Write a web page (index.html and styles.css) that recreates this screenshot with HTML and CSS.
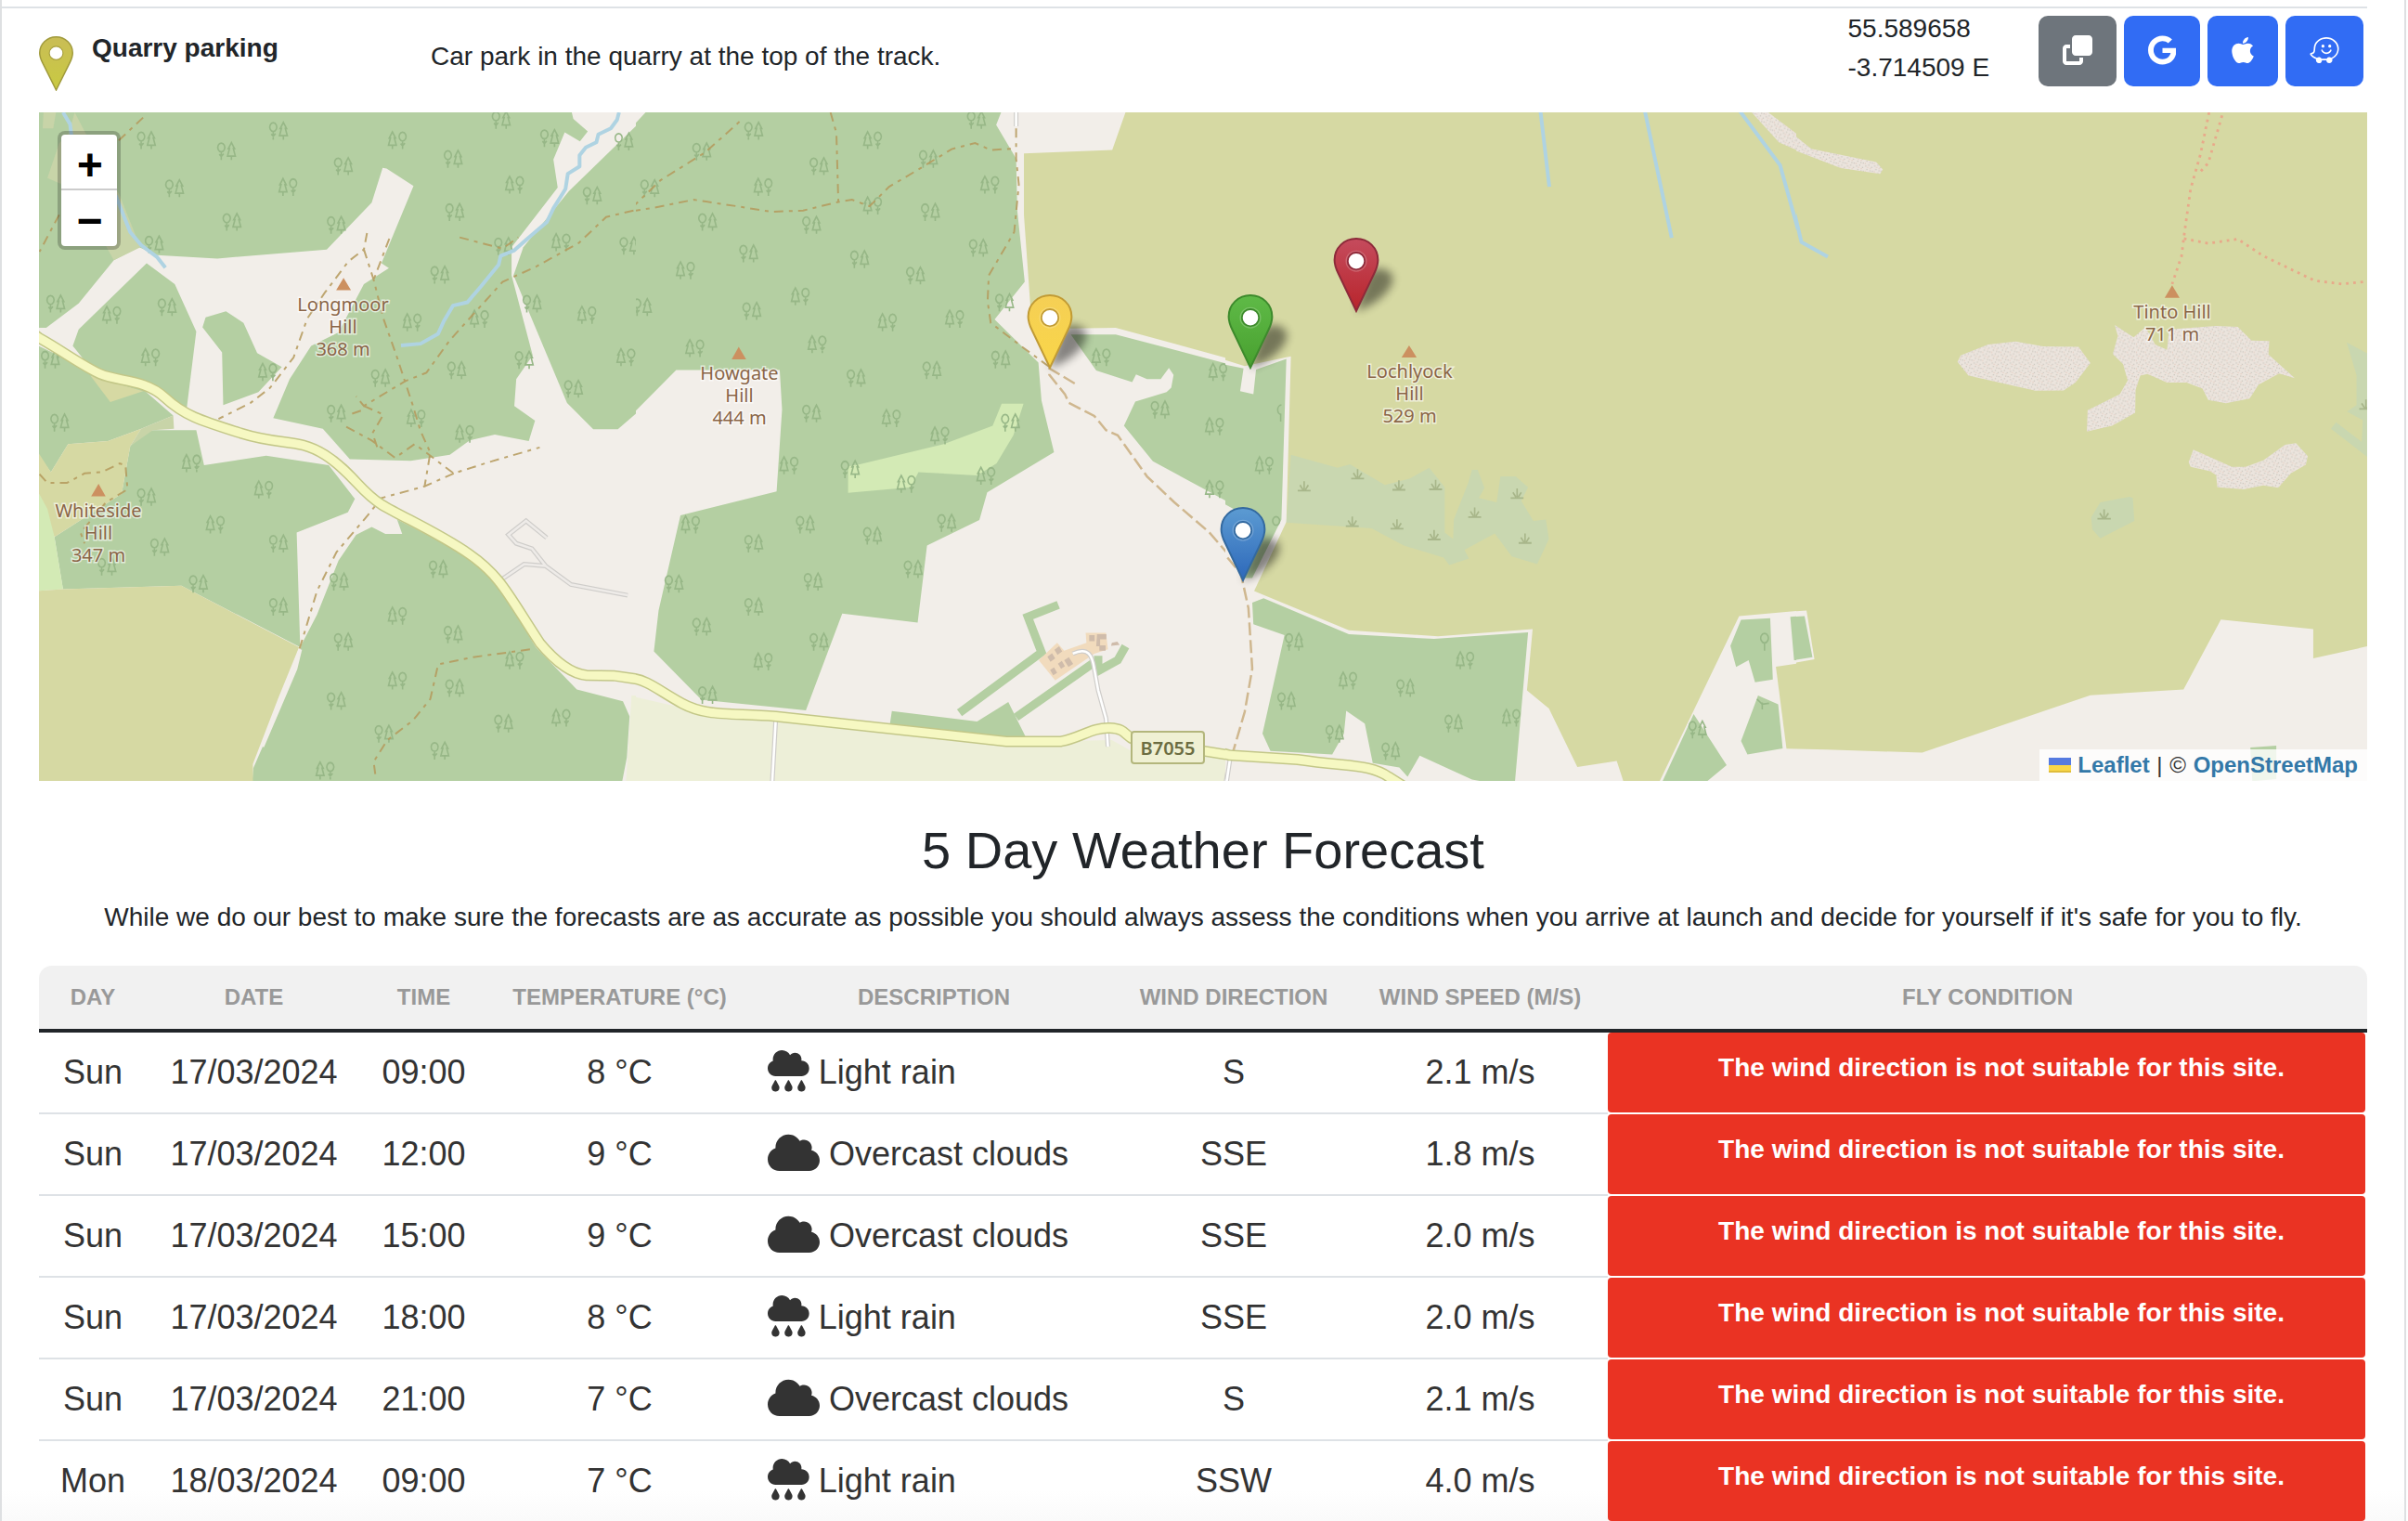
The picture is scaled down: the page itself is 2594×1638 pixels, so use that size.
FILE: index.html
```html
<!DOCTYPE html>
<html lang="en">
<head>
<meta charset="utf-8">
<title>Site guide</title>
<link rel="stylesheet" href="styles.css">
</head>
<body>
<svg class="defs" aria-hidden="true">
  <symbol id="rain" viewBox="0 0 512 512"><path d="M96 320c-53 0-96-43-96-96c0-42.5 27.6-78.6 65.9-91.2C64.7 126.1 64 119.1 64 112C64 50.1 114.1 0 176 0c43.1 0 80.5 24.3 99.2 60c14.7-17.1 36.5-28 60.8-28c44.2 0 80 35.8 80 80c0 5.5-.6 10.8-1.6 16c.5 0 1.1 0 1.6 0c53 0 96 43 96 96s-43 96-96 96H96zm-6.8 52c1.3-2.5 3.9-4 6.8-4s5.4 1.5 6.8 4l35.1 64.6c4.1 7.5 6.2 15.8 6.2 24.3v3c0 26.5-21.5 48-48 48s-48-21.5-48-48v-3c0-8.5 2.1-16.9 6.2-24.3L89.2 372zm160 0c1.3-2.5 3.9-4 6.8-4s5.4 1.5 6.8 4l35.1 64.6c4.1 7.5 6.2 15.8 6.2 24.3v3c0 26.5-21.5 48-48 48s-48-21.5-48-48v-3c0-8.5 2.1-16.9 6.2-24.3L249.2 372zm124.9 64.6L409.2 372c1.3-2.5 3.9-4 6.8-4s5.4 1.5 6.8 4l35.1 64.6c4.1 7.5 6.2 15.8 6.2 24.3v3c0 26.5-21.5 48-48 48s-48-21.5-48-48v-3c0-8.5 2.1-16.9 6.2-24.3z"/></symbol>
  <symbol id="cloud" viewBox="0 0 640 512"><path d="M0 336c0 79.5 64.5 144 144 144H512c70.7 0 128-57.3 128-128c0-61.9-44-113.6-102.4-125.4c4.1-10.7 6.4-22.4 6.4-34.6c0-53-43-96-96-96c-19.7 0-38.1 6-53.3 16.2C367 64.2 315.3 32 256 32C167.6 32 96 103.6 96 192c0 2.7 .1 5.4 .2 8.1C40.2 219.8 0 273.2 0 336z"/></symbol>
  <linearGradient id="g-yellow" x2="0" y2="1"><stop offset="0" stop-color="#f5cf55"/><stop offset="1" stop-color="#f9d648"/></linearGradient>
  <linearGradient id="g-green" x2="0" y2="1"><stop offset="0" stop-color="#5fba47"/><stop offset="1" stop-color="#48a02f"/></linearGradient>
  <linearGradient id="g-red" x2="0" y2="1"><stop offset="0" stop-color="#c54b5d"/><stop offset="1" stop-color="#b8242b"/></linearGradient>
  <linearGradient id="g-blue" x2="0" y2="1"><stop offset="0" stop-color="#5c9bd2"/><stop offset="1" stop-color="#2d68ba"/></linearGradient>
  <linearGradient id="g-olive" x2="0" y2="1"><stop offset="0" stop-color="#c9bd56"/><stop offset="1" stop-color="#c9ca41"/></linearGradient>
  <filter id="soft" x="-60%" y="-60%" width="220%" height="220%"><feGaussianBlur stdDeviation="5"/></filter>
</svg>

<main class="page">
  <div class="rule"></div>
  <section class="place">
    <div class="place-name">
      <svg class="pin" viewBox="0 0 25 41" preserveAspectRatio="none">
        <path d="M12.5.5C5.9.5.5 5.9.5 12.5c0 2.6.8 4.800 2.100 7.400L12.500 40.300l9.900-20.400c1.300-2.600 2.100-4.800 2.100-7.400C24.500 5.900 19.100.5 12.500.5z" fill="url(#g-olive)" stroke="#a09a3c"/>
        <circle cx="12.500" cy="12.600" r="5" fill="#fff" stroke="#a9a13f" stroke-width=".8"/>
      </svg>
      <strong>Quarry parking</strong>
    </div>
    <div class="place-text">Car park in the quarry at the top of the track.</div>
    <div class="place-coords">55.589658<br>-3.714509 E</div>
    <div class="place-buttons">
      <button class="btn btn-gray"><svg width="32" height="32" viewBox="0 0 512 512"><path d="M288 448L64 448l0-224 64 0 0-64-64 0c-35.300 0-64 28.700-64 64L0 448c0 35.300 28.700 64 64 64l224 0c35.300 0 64-28.700 64-64l0-64-64 0 0 64zm-64-96l224 0c35.300 0 64-28.700 64-64l0-224c0-35.300-28.700-64-64-64L224 0c-35.300 0-64 28.700-64 64l0 224c0 35.300 28.700 64 64 64z"/></svg></button>
      <button class="btn"><svg width="30.5" height="32" viewBox="0 0 488 512"><path d="M488 261.800C488 403.300 391.100 504 248 504 110.800 504 0 393.200 0 256S110.800 8 248 8c66.800 0 123 24.500 166.300 64.900l-67.500 64.900C258.500 52.600 94.300 116.600 94.300 256c0 86.500 69.100 156.600 153.700 156.600 98.200 0 135-70.400 140.800-106.900H248v-85.300h236.100c2.300 12.700 3.900 24.900 3.900 41.400z"/></svg></button>
      <button class="btn"><svg width="24" height="32" viewBox="0 0 384 512"><path d="M318.700 268.700c-.2-36.700 16.400-64.400 50-84.800-18.800-26.900-47.200-41.700-84.700-44.600-35.500-2.800-74.300 20.700-88.500 20.700-15 0-49.400-19.700-76.400-19.700C63.300 141.200 4 184.800 4 273.500q0 39.300 14.400 81.200c12.800 36.700 59 126.700 107.200 125.200 25.200-.6 43-17.900 75.800-17.900 31.800 0 48.300 17.900 76.400 17.900 48.600-.7 90.400-82.500 102.600-119.300-65.200-30.700-61.700-90-61.700-91.900zm-56.600-164.200c27.300-32.400 24.800-61.900 24-72.500-24.100 1.400-52 16.400-67.900 34.900-17.500 19.800-27.800 44.300-25.600 71.900 26.100 2 49.900-11.400 69.500-34.300z"/></svg></button>
      <button class="btn"><svg width="32" height="32" viewBox="0 0 512 512"><path d="M502.170 201.670C516.690 287.530 471.230 369.590 389 409.800c13 34.100-12.400 70.200-48.320 70.200a51.680 51.680 0 0 1-51.570-49c-6.440.19-64.200 0-76.330-.64A51.690 51.690 0 0 1 159 479.920c-33.860-1.360-57.950-34.840-47-67.920-37.210-13.110-72.540-34.870-99.620-70.800-13-17.280-.48-41.800 20.840-41.800 46.310 0 32.220-54.170 43.150-110.260C94.800 95.200 193.120 32 288.090 32c102.480 0 197.150 70.670 214.080 169.670zM373.510 388.280c42-19.180 81.330-56.710 96.290-102.140 40.480-123.090-64.150-228-181.710-228-83.450 0-170.320 55.420-186.070 136-9.530 48.910 5 131.350-68.750 131.350C58.210 358.600 91.600 378.110 127 389.540c24.660-21.800 63.870-15.470 79.830 14.340 14.220 1 79.190 1.180 87.900.82a51.690 51.690 0 0 1 78.780-16.420zM205.120 187.130c0-34.740 50.840-34.750 50.840 0s-50.840 34.740-50.840 0zm116.570 0c0-34.740 50.860-34.750 50.860 0s-50.860 34.750-50.860 0zm-122.610 70.690c-3.440-16.940 22.180-22.180 25.620-5.210l.06.28c4.140 21.420 29.850 44 64.120 43.070 35.680-.94 59.250-22.210 64.110-42.770 4.460-16.050 28.600-10.360 25.470 6-5.230 22.180-31.210 62-91.460 62.900-42.550 0-80.880-27.840-87.900-64.250z"/></svg></button>
    </div>
  </section>

  <section class="map">
    <svg class="map-canvas" width="2508" height="720" viewBox="0 0 2508 720">
      <defs>
        <clipPath id="c1"><rect x="0" y="0" width="643" height="720"/></clipPath>
        <clipPath id="c2"><rect x="643" y="0" width="635" height="720"/></clipPath>
        <clipPath id="c3"><rect x="1278" y="0" width="615" height="720"/></clipPath>
        <clipPath id="c4"><rect x="1893" y="0" width="615" height="720"/></clipPath>
        <marker id="ta" markerUnits="userSpaceOnUse" markerWidth="60" markerHeight="60" viewBox="-30 -30 60 60"><path class="tree" d="M-13 2V21M-18 8L-13 13L-7 7M-13 2a9 10 0 1 1 .1 0M13 -19L5 -5H8L3 12H23L18 -5H21ZM13 12V21"/></marker>
        <marker id="tb" markerUnits="userSpaceOnUse" markerWidth="60" markerHeight="60" viewBox="-30 -30 60 60"><path class="tree" d="M14 2V21M9 8L14 13L20 7M14 2a9 10 0 1 1 .1 0M-12 -19L-20 -5H-17L-22 12H-2L-7 -5H-4ZM-12 12V21"/></marker>
        <marker id="reed" markerUnits="userSpaceOnUse" markerWidth="50" markerHeight="50" viewBox="-25 -25 50 50"><path class="reed" d="M-17 10H17M0 10V-12M-3 8L-11 -3M3 8L11 -3"/></marker>
        <pattern id="scree" width="23" height="19" patternUnits="userSpaceOnUse"><rect width="23" height="19" fill="#ebe4dd"/><path class="dots" d="M3 4h3M11 2h3M18 7h3M6 12h3M14 15h3M20 16h3" stroke="#cbc6be"/><path class="dots" d="M8 7h2.500M2 17h2.500M15 10h2.500" stroke="#e4cabd"/></pattern>
      </defs>

      <!-- west -->
      <g clip-path="url(#c1)"><g transform="translate(-12 -6) scale(.42092 .46556)">
        <path class="wood" d="M20 5H1390L1396 28L1433 57L1413 80L1374 59L1345 122L1356 187L1238 325V390L1292 575L1250 630L1245 692L1298 726L1282 773L1195 758L1130 772L1080 805L980 819L824 815L755 745L628 720L670 630L725 553L795 522L860 410L924 373L905 362L987 183L918 143L908 141L880 222L765 330L485 351L330 343L285 325L220 355L130 455L47 511H20Z"/>
        <path class="wood" d="M304 362L376 410L431 520L407 695L300 650L170 615L115 553L130 515Z"/>
        <path class="wood" d="M20 550L160 610L290 650L372 714L290 745L205 773L103 780L59 845L20 797Z"/>
        <path class="wood" d="M290 757L320 748H431L451 829L610 807L770 829L837 907L819 938L688 985L697 1250L393 1108L90 1116L68 995L240 895L262 785Z"/>
        <path class="wood" d="M840 990L880 972L915 988H958L945 955L1130 1040L1200 1100L1300 1250L1405 1348L1523 1375L1540 1410L1533 1505L1518 1575H573L577 1530L688 1300L700 1245L740 1175L795 1050Z"/>
        <path class="wood" d="M455 487L507 473L552 500L587 570L650 602L590 660L500 690L497 568L447 510Z"/>
        <path class="wood" d="M1575 28L1385 195L1268 325L1243 390L1380 685L1447 746H1510L1575 695Z"/>
        <path class="mix" d="M120 13L150 65L235 205L288 325L220 355L200 322L140 200L50 165L80 85L105 60ZM40 13H72L65 50H38Z"/>
        <path class="heath" d="M160 622L295 658L211 683Z"/>
        <path class="heath" d="M20 790L59 845L103 780L205 773L290 745L262 785L240 895L68 995L20 885Z"/>
        <path class="mix" d="M290 745L372 714L374 745L320 748L262 785Z"/>
        <path class="meadow" d="M20 880L50 930L68 995L90 1116L20 1120Z"/>
        <path class="heath" d="M20 1120L90 1116L393 1108L694 1250L640 1370L576 1520V1575H20Z"/>
        <path class="strip" d="M697 1255L685 1300L600 1480"/>
        <path class="farm" d="M1545 1362H1575V1575H1530Z"/>
        <polyline class="pts" marker-start="url(#ta)" marker-mid="url(#ta)" marker-end="url(#ta)" points="641,55 303,77 508,102 807,137 375,188 522,266 789,273 323,318 1088,120 1211,30 1335,72 1092,243 1217,322 1054,388 1444,205 1538,321 1396,652 1097,609 902,627 789,709 71,455 356,463 57,584 81,730 303,902 337,1018 436,1103 641,1010 641,1156 202,1063 1050,1069 807,1237 1088,1220 1092,1344 789,1374 911,1450 1217,1426 1054,1489 796,1098 1290,455 1525,80 1270,585"/>
        <polyline class="pts" marker-start="url(#tb)" marker-mid="url(#tb)" marker-end="url(#tb)" points="945,77 665,185 1245,180 1364,313 1155,490 983,498 1430,481 214,481 313,579 613,613 1530,579 993,720 1117,756 418,824 603,885 479,966 945,1177 945,1327 1245,1280 1364,1413 760,1535"/>
        <path class="water" d="M90 13L108 40L112 70M225 205L240 240L262 290L290 320L330 347L352 372"/>
        <path class="water" d="M1513 13L1508 30L1492 50L1460 64L1455 82L1428 94L1412 112V138L1382 155L1376 190L1345 235L1328 267L1285 300L1245 332L1210 345L1205 365L1160 415L1125 452L1088 460L1065 495L1050 525L1005 548L955 552"/>
        <path class="track" d="M868 292L860 330L820 358L760 430L715 490L680 580L620 650L570 685L488 722M860 330L885 400L910 490L945 580L985 690L1005 750L1030 800L1015 880M925 305L885 400M1105 302L1215 328L1255 302M1550 240L1480 255L1410 315L1300 370L1215 405L1150 470L1080 540L1020 615L965 635L860 692L840 670M860 692L910 712L882 755L895 790M830 710L862 700M815 740L880 772L940 812L990 780L1090 848L1180 822L1310 788M1090 848L1015 878L905 905L870 945L790 1030L740 1120L695 1255M295 25L230 80M80 250L30 335M30 850L50 870H100L145 848L190 845L235 825L250 830L255 885L200 915L135 985L145 1010M1285 1255L1230 1262L1140 1273L1050 1290L1030 1370L985 1420L920 1465L885 1515L890 1550"/>
        <path class="lane-c" d="M1210 1095L1270 1058L1325 1062L1390 1105L1535 1130M1325 1062L1290 1022L1250 1010L1230 990L1275 958L1328 997"/><path class="lane" d="M1210 1095L1270 1058L1325 1062L1390 1105L1535 1130M1325 1062L1290 1022L1250 1010L1230 990L1275 958L1328 997"/>
        <path class="road-c" d="M0 515L29 535C80 560 140 600 185 618S300 630 350 672S440 725 545 755S690 765 760 805S850 890 905 920S1050 985 1130 1035S1230 1130 1310 1240Q1375 1310 1430 1315L1500 1316L1575 1326"/>
        <path class="road" d="M0 515L29 535C80 560 140 600 185 618S300 630 350 672S440 725 545 755S690 765 760 805S850 890 905 920S1050 985 1130 1035S1230 1130 1310 1240Q1375 1310 1430 1315L1500 1316L1575 1326"/>
        <path class="peak" d="M789 424L808 396L827 424ZM162 901L181 872L199 901Z"/>
      </g></g>

      <!-- centre west -->
      <g clip-path="url(#c2)"><g transform="translate(638 -6) scale(.42092 .46556)">
        <path class="wood" d="M-5 53L45 5H950L934 42L985 120L988 240L1007 405L930 492L1042 592L1050 680L1082 799L911 892L891 956L757 1015L733 1193L540 1172L447 1396L180 1372L58 1260L70 1165L126 945L372 890L386 700L380 609H115L-5 718Z"/>
        <path class="meadow" d="M555 893V832L585 827L800 780L925 738L948 687H1004L978 760L935 825L885 853L735 845L715 880Z"/>
        <path class="heath" d="M1268 5L1231 100L1005 108V250L1023 480L1125 513L1240 511L1575 594V5Z"/>
        <path class="wood" d="M1125 527H1240L1575 606L1557 660H1575V938L1540 920L1335 820L1261 738L1290 682L1370 660L1382 650L1388 620L1376 604L1355 630H1320L1292 619L1282 637L1190 610Z"/>
        <path class="farm" d="M-5 1362L130 1390L370 1412L1000 1470L1230 1465L1280 1490L1532 1508L1520 1575H-5Z"/>
        <path class="belt" d="M840 1402L1050 1262L1015 1180L1093 1152M985 1412L1185 1285M1195 1270V1305L1245 1280L1265 1248"/>
        <path class="wood" d="M667 1398L885 1422L965 1377L1012 1462L662 1428Z"/>
        <path fill="#f1dbbd" d="M1043 1280L1090 1240L1108 1258L1165 1240L1163 1217H1215L1220 1255L1185 1265L1085 1327Z"/>
        <path fill="#cfbcab" d="M1065 1272l12-8l8 12l-12 8zM1083 1256l12-8l8 12l-12 8zM1072 1303l10-6l8 12l-10 6zM1092 1288l10-6l8 12l-10 6zM1108 1280l12-7l11 16l-12 7zM1172 1222h14v14h-14zM1192 1220h24v12h-16v14h14v12h-16v-10h-8zM1230 1240l14-3l6 8l-22 2z"/>
        <polyline class="pts" marker-start="url(#ta)" marker-mid="url(#ta)" marker-end="url(#ta)" points="313,55 180,103 480,137 47,188 760,120 883,30 765,243 195,266 461,273 300,339 584,352 727,390 888,326 28,463 308,472 945,584 575,627 769,609 461,709 970,730 560,838 445,966 313,1010 617,992 807,962 721,1069 465,1098 313,1156 109,1103 180,1202 480,1237 195,1360 1353,700 955,452"/>
        <polyline class="pts" marker-start="url(#tb)" marker-mid="url(#tb)" marker-end="url(#tb)" points="617,77 337,185 917,180 617,228 138,378 432,438 655,498 827,490 162,558 475,549 665,720 789,760 403,829 703,872 907,853 151,966 337,1283 1202,579 1501,613 1492,739 1492,884"/>
        <path class="track" d="M985 50V120L992 180L980 290L915 390L912 450L920 500L1000 555L1075 605M0 242L60 233L160 215L270 230L360 243L440 240L530 220L565 215L610 230L660 185L735 145L820 98L880 84L920 100L975 97M0 235L75 170L190 105L285 28M510 13L525 60L530 220"/>
        <path class="path" d="M1135 640L1070 605V620L1110 665L1120 685L1185 715L1215 748L1245 760L1320 855L1390 915L1480 985L1575 1085M1575 1390L1545 1480"/>
        <path class="lane-c" d="M1130 1265C1170 1248 1180 1270 1185 1300L1195 1350L1215 1415L1220 1480M370 1415L360 1575M985 5V45M1532 1505L1520 1575"/>
        <path class="lane w" d="M1130 1265C1170 1248 1180 1270 1185 1300L1195 1350L1215 1415L1220 1480M370 1415L360 1575M985 5V45M1532 1505L1520 1575"/>
        <path class="road-c" d="M-6 1321L0 1322C40 1325 70 1350 130 1380S250 1402 370 1410L960 1468L1100 1468C1150 1460 1180 1435 1225 1437S1260 1455 1290 1465L1575 1506"/>
        <path class="road" d="M-6 1321L0 1322C40 1325 70 1350 130 1380S250 1402 370 1410L960 1468L1100 1468C1150 1460 1180 1435 1225 1437S1260 1455 1290 1465L1575 1506"/>
        <path class="peak" d="M257 584L275 555L294 584Z"/>
      </g></g>

      <!-- centre east -->
      <g clip-path="url(#c3)"><g transform="translate(1258 -6) scale(.40816 .46556)">
        <path class="heath" d="M-5 5H1575V1165L1405 1178L1187 1575H1105L1082 1513L978 1527L903 1392L845 1350L860 1208L610 1225L375 1211L125 1120L210 960L222 577L100 600L-5 571Z"/>
        <path class="marsh" d="M222 805L345 835L378 827L470 875L535 860L587 835L628 880V985L650 1000L652 955L690 870L700 840H715L733 882L718 905L765 915L775 855H815L848 880L830 912L862 958L895 955L903 1000L872 1058L805 1040L760 987L680 1025L692 1045L640 1060L625 1043L520 1015L435 975L210 962Z"/>
        <path class="wood" d="M-5 587L97 605L88 658L123 665L130 608L210 583L197 955L120 1090H100L70 930L-5 893Z"/>
        <path class="wood" d="M120 1147L150 1137L375 1220L600 1231L848 1216L812 1575L700 1556L562 1501L530 1550L508 1528L438 1518L417 1427L368 1397L362 1450L331 1498L168 1490L147 1450L205 1222L123 1197Z"/>
        <path class="wood" d="M1410 1187L1487 1183L1494 1325L1447 1331L1430 1280L1397 1296L1382 1247ZM1540 1180L1575 1177V1280H1550ZM1455 1362L1508 1382L1520 1484L1427 1498L1410 1467ZM1285 1405L1372 1523L1300 1575H1195Z"/>
        <path class="heath" d="M1502 1295L1575 1286V1486L1530 1485Z"/>
        <path class="scree" d="M1430 5H1470L1568 70V105L1510 82Z"/>
        <polyline class="pts" marker-start="url(#ta)" marker-mid="url(#ta)" marker-end="url(#ta)" points="230,1237 524,1344 210,1374 337,1450 485,1490 651,1426 1295,1440"/>
        <polyline class="pts" marker-start="url(#tb)" marker-mid="url(#tb)" marker-end="url(#tb)" points="29,614 21,739 21,884 151,829 681,1280 372,1327 803,1413"/>
        <path class="tree" d="M1472 1240V1258M1472 1240a10 11 0 1 1 .1 0M183 968a9 10 0 1 1 .1 0M195 712V728M197 712a9 10 0 0 1 0-22M1466 1378v16M1452 1370l14 12l18 -2"/>
        <polyline class="pts" marker-start="url(#reed)" marker-mid="url(#reed)" marker-end="url(#reed)" points="257,878 398,850 507,876 604,875 819,895 384,960 502,966 600,991 707,939 840,999"/>
        <path class="water" d="M880 5L904 185M1155 5L1227 303M1403 5L1513 135L1575 330"/>
        <path class="path" d="M-5 980L90 1080L110 1160L120 1300L100 1400L70 1490"/>
        <path class="farm" d="M-5 1505L45 1515L30 1575H-5Z"/>
        <path class="lane-c" d="M62 1505L50 1575"/><path class="lane w" d="M62 1505L50 1575"/>
        <path class="road-c" d="M-5 1484L60 1500L240 1510C380 1528 430 1520 480 1550L520 1572"/>
        <path class="road" d="M-5 1484L60 1500L240 1510C380 1528 430 1520 480 1550L520 1572"/>
        <path class="peak" d="M514 580L534 552L554 580Z"/>
      </g></g>

      <!-- east -->
      <g clip-path="url(#c4)"><g transform="translate(1888 -6) scale(.42347 .46556)">
        <path class="heath" d="M-5 5H1475V1246L1327 1276V1208L1092 1186L997 1348L760 1361L332 1494L90 1487L-5 1485Z"/>
        <path class="land" d="M-5 1168L38 1165L58 1278L-5 1288Z"/>
        <path class="wood" d="M-5 1180L33 1178L53 1273L7 1280L-5 1230ZM1167 1482L1233 1478V1555L1172 1560Z"/>
        <path class="scree" d="M-5 57L50 97L215 128L232 145L225 155L125 142L-5 96Z"/>
        <path class="scree" d="M422 590L430 575L500 550L570 543L640 554L730 555L760 593L722 638L692 656L620 657L450 622Z"/>
        <path class="scree" d="M822 505L870 533L900 510L925 550L955 562L960 515L1080 507L1135 509L1170 541L1215 542L1213 573L1280 628L1240 617L1188 643L1165 675L1105 686L1060 678L1045 652L1005 638H955L905 618L887 622L875 655L874 708L815 738L751 751L753 702L835 665L855 633L843 595L817 572L830 530Z"/>
        <path class="scree" d="M1022 793L1120 833H1155L1200 818L1255 782L1283 778L1313 808L1308 828L1270 848L1238 881L1200 876L1150 885L1083 880L1080 852L1065 843L1015 833L1010 822Z"/>
        <path class="marsh" d="M762 950L785 915L860 902L868 905L872 958L785 998L765 978ZM1412 545L1470 573V814L1372 745L1385 730L1450 775L1453 725L1413 705L1437 690V620Z"/>
        <polyline class="pts" marker-start="url(#reed)" marker-mid="url(#reed)" marker-end="url(#reed)" points="795,943 1461,689"/>
        <path class="water" d="M-5 200L25 313L92 347"/>
        <path class="foot" d="M1062 13L1040 110L1015 190L998 300L992 345L968 410M1095 20L1060 130L1035 155M998 305L1060 316L1135 306L1200 345L1330 402L1400 410L1464 404"/>
        <path class="peak" d="M949 442L968 413L987 442Z"/>
      </g></g>

      <g class="labels">
        <text x="327.500" y="214">Longmoor</text><text x="327.500" y="238">Hill</text><text x="327.500" y="262">368 m</text>
        <text x="64" y="436">Whiteside</text><text x="64" y="460">Hill</text><text x="64" y="483.500">347 m</text>
        <text x="754.500" y="287.500">Howgate</text><text x="754.500" y="311.500">Hill</text><text x="754.500" y="335.500">444 m</text>
        <text x="1476.500" y="285.500">Lochlyock</text><text x="1476.500" y="309.500">Hill</text><text x="1476.500" y="333.500">529 m</text>
        <text x="2298" y="221.500">Tinto Hill</text><text x="2298" y="245.500">711 m</text>
      </g>
      <rect x="1177" y="667" width="78" height="34" rx="3" fill="#eff0d3" stroke="#b3b67c" stroke-width="2"/>
      <text class="shield" x="1216" y="692">B7055</text>

      <g transform="translate(1064 195)"><path class="shadow" d="M25 80L36 44C44 28 60 34 64 42C67 54 50 72 25 80Z"/><g transform="scale(2)"><path class="body" fill="url(#g-yellow)" stroke="#c19b35" d="M12.500 1C6 1 .8 6 .8 12.500c0 2.600.8 4.800 2.100 7.400L12.500 40l9.600-20.100c1.300-2.600 2.100-4.800 2.100-7.400C24.200 6 19 1 12.500 1z"/><circle class="glow" cx="12.500" cy="13.100" r="5.400"/><circle class="hole" cx="12.500" cy="13.100" r="4.600" stroke="#c19b35"/></g></g>
      <g transform="translate(1280 195)"><path class="shadow" d="M25 80L36 44C44 28 60 34 64 42C67 54 50 72 25 80Z"/><g transform="scale(2)"><path class="body" fill="url(#g-green)" stroke="#3d8a2c" d="M12.500 1C6 1 .8 6 .8 12.500c0 2.600.8 4.800 2.100 7.400L12.500 40l9.600-20.100c1.300-2.600 2.100-4.800 2.100-7.400C24.200 6 19 1 12.500 1z"/><circle class="glow" cx="12.500" cy="13.100" r="5.400"/><circle class="hole" cx="12.500" cy="13.100" r="4.600" stroke="#3d8a2c"/></g></g>
      <g transform="translate(1394 134)"><path class="shadow" d="M25 80L36 44C44 28 60 34 64 42C67 54 50 72 25 80Z"/><g transform="scale(2)"><path class="body" fill="url(#g-red)" stroke="#8d2a3a" d="M12.500 1C6 1 .8 6 .8 12.500c0 2.600.8 4.800 2.100 7.400L12.500 40l9.600-20.100c1.300-2.600 2.100-4.800 2.100-7.400C24.200 6 19 1 12.500 1z"/><circle class="glow" cx="12.500" cy="13.100" r="5.400"/><circle class="hole" cx="12.500" cy="13.100" r="4.600" stroke="#8d2a3a"/></g></g>
      <g transform="translate(1272 424)"><path class="shadow" d="M25 80L36 44C44 28 60 34 64 42C67 54 50 72 25 80Z"/><g transform="scale(2)"><path class="body" fill="url(#g-blue)" stroke="#33699f" d="M12.500 1C6 1 .8 6 .8 12.500c0 2.600.8 4.800 2.100 7.400L12.500 40l9.600-20.100c1.300-2.600 2.100-4.800 2.100-7.400C24.200 6 19 1 12.500 1z"/><circle class="glow" cx="12.500" cy="13.100" r="5.400"/><circle class="hole" cx="12.500" cy="13.100" r="4.600" stroke="#33699f"/></g></g>
    </svg>
    <div class="zoom"><a class="zoom-in">+</a><a class="zoom-out">&#x2212;</a></div>
    <div class="credit"><svg width="24" height="16" viewBox="0 0 12 8"><path fill="#567be0" d="M0 0h12v4H0z"/><path fill="#f9d749" d="M0 4h12v3H0z"/><path fill="#dfbc3b" d="M0 7h12v1H0z"/></svg><b>Leaflet</b><span>|</span><span>©</span><b>OpenStreetMap</b></div>
  </section>

  <h2 class="title">5 Day Weather Forecast</h2>
  <p class="note">While we do our best to make sure the forecasts are as accurate as possible you should always assess the conditions when you arrive at launch and decide for yourself if it's safe for you to fly.</p>

  <table class="forecast">
    <colgroup><col class="c-day"><col class="c-date"><col class="c-time"><col class="c-temp"><col class="c-desc"><col class="c-dir"><col class="c-speed"><col class="c-fly"></colgroup>
    <thead><tr><th>DAY</th><th>DATE</th><th>TIME</th><th>TEMPERATURE (°C)</th><th>DESCRIPTION</th><th>WIND DIRECTION</th><th>WIND SPEED (M/S)</th><th>FLY CONDITION</th></tr></thead>
    <tbody>
      <tr><td>Sun</td><td>17/03/2024</td><td>09:00</td><td>8 °C</td><td class="desc"><svg class="i-rain"><use href="#rain"/></svg> Light rain</td><td>S</td><td>2.1 m/s</td><td class="fly"><div class="alert">The wind direction is not suitable for this site.</div></td></tr>
      <tr><td>Sun</td><td>17/03/2024</td><td>12:00</td><td>9 °C</td><td class="desc"><svg class="i-cloud"><use href="#cloud"/></svg> Overcast clouds</td><td>SSE</td><td>1.8 m/s</td><td class="fly"><div class="alert">The wind direction is not suitable for this site.</div></td></tr>
      <tr><td>Sun</td><td>17/03/2024</td><td>15:00</td><td>9 °C</td><td class="desc"><svg class="i-cloud"><use href="#cloud"/></svg> Overcast clouds</td><td>SSE</td><td>2.0 m/s</td><td class="fly"><div class="alert">The wind direction is not suitable for this site.</div></td></tr>
      <tr><td>Sun</td><td>17/03/2024</td><td>18:00</td><td>8 °C</td><td class="desc"><svg class="i-rain"><use href="#rain"/></svg> Light rain</td><td>SSE</td><td>2.0 m/s</td><td class="fly"><div class="alert">The wind direction is not suitable for this site.</div></td></tr>
      <tr><td>Sun</td><td>17/03/2024</td><td>21:00</td><td>7 °C</td><td class="desc"><svg class="i-cloud"><use href="#cloud"/></svg> Overcast clouds</td><td>S</td><td>2.1 m/s</td><td class="fly"><div class="alert">The wind direction is not suitable for this site.</div></td></tr>
      <tr><td>Mon</td><td>18/03/2024</td><td>09:00</td><td>7 °C</td><td class="desc"><svg class="i-rain"><use href="#rain"/></svg> Light rain</td><td>SSW</td><td>4.0 m/s</td><td class="fly"><div class="alert">The wind direction is not suitable for this site.</div></td></tr>
    </tbody>
  </table>
</main>
</body>
</html>
```
FILE: styles.css
```css
* { box-sizing: border-box; }
body { margin: 0; background: #fff; color: #212529; font: 28px/42px "Liberation Sans", Arial, sans-serif; overflow: hidden; }
.defs { position: absolute; width: 0; height: 0; }

.page { width: 2592px; height: 1638px; overflow: hidden; padding-top: 7px; border-left: 2px solid #dee0e2; border-right: 2px solid #dee0e2; background: linear-gradient(#fff 1605px, #fafafa 1638px); }
.rule { height: 2px; margin-right: 40px; background: #dee2e6; }

.place { display: flex; height: 112px; padding: 0 44px 0 40px; }
.place-name { display: flex; align-items: flex-start; gap: 20px; width: 422px; padding-top: 22px; }
.pin { width: 37px; height: 59px; margin-top: 8px; }
.place-text { flex: 1; padding-top: 31px; }
.place-coords { width: 205px; padding-top: 1px; }
.place-buttons { display: flex; align-items: flex-start; gap: 8px; padding-top: 8px; }
.btn { display: flex; align-items: center; height: 76px; padding: 0 26px 2px; border: 0; border-radius: 10px; background: #316cf4; }
.btn svg { fill: #fff; }
.btn-gray { background: #6e757c; }

.map { position: relative; height: 720px; margin: 0 40px; background: #f2eee9; overflow: hidden; }
.map-canvas { display: block; }
.map-canvas path { vector-effect: non-scaling-stroke; }
.wood { fill: #b4cfa2; }
.heath { fill: #d6d9a3; }
.mix { fill: #c8d4a8; }
.meadow { fill: #d3eab5; }
.farm { fill: #edefd8; }
.land { fill: #f2eee9; }
.marsh { fill: #c9d7b0; }
.scree { fill: url(#scree); }
.pts { fill: none; stroke: none; }
.map-canvas .tree { fill: none; stroke: #97b787; stroke-width: 3.800px; vector-effect: none; }
.map-canvas .reed { fill: none; stroke: #a8b68a; stroke-width: 4px; vector-effect: none; }
.map-canvas .dots { stroke-width: 2.600px; vector-effect: none; }
.water { fill: none; stroke: #afd3e2; stroke-width: 4px; stroke-linejoin: round; }
.strip { fill: none; stroke: #f2eee9; stroke-width: 4px; }
.belt { fill: none; stroke: #b4cfa2; stroke-width: 9px; }
.track { fill: none; stroke: #b59a5c; stroke-width: 2px; stroke-dasharray: 10 6 4 6; opacity: .85; }
.path { fill: none; stroke: #cfb78f; stroke-width: 2.500px; stroke-dasharray: 14 5; }
.foot { fill: none; stroke: #e8a98a; stroke-width: 2.800px; stroke-dasharray: 2.800 5; }
.lane-c { fill: none; stroke: #cfcdca; stroke-width: 5px; }
.lane { fill: none; stroke: #eeebe8; stroke-width: 2.600px; }
.lane.w { stroke: #fff; }
.road-c { fill: none; stroke: #c3c788; stroke-width: 12px; }
.road { fill: none; stroke: #f6f8c2; stroke-width: 9px; }
.peak { fill: #cc9060; }
.labels text { font: 20px "Noto Sans", sans-serif; text-anchor: middle; fill: #8a6547; stroke: rgba(255, 255, 255, .6); stroke-width: 3px; paint-order: stroke; }
.shield { font: 600 20px "Noto Sans", sans-serif; text-anchor: middle; fill: #6c6d42; }
.shadow { fill: #000; opacity: .45; filter: url(#soft); }
.body { stroke-width: 2px; }
.hole { fill: #fff; stroke-width: .9; }
.glow { fill: none; stroke: rgba(255, 255, 255, .2); stroke-width: .7; }

.zoom { position: absolute; left: 20px; top: 20px; width: 68px; border: 4px solid rgba(0, 0, 0, .22); border-radius: 8px; background: #fff; background-clip: padding-box; }
.zoom a { display: block; height: 60px; padding: 9px 0 0 2px; font: bold 48px/54px "Liberation Mono", monospace; text-align: center; color: #000; }
.zoom-in { border-bottom: 2px solid #ccc; }
.credit { position: absolute; right: 0; bottom: 0; display: flex; align-items: center; gap: 7.700px; height: 34px; padding: 0 10px; background: rgba(255, 255, 255, .8); color: #333; font-size: 24px; line-height: 32px; }
.credit b { color: #3378a8; }

.title { margin: 41px 0 17px; font-size: 56px; line-height: 67px; font-weight: 400; text-align: center; }
.note { margin: 0; padding: 1px 0 31px; text-align: center; }

.forecast { width: 2508px; margin: 0 40px; table-layout: fixed; border-collapse: separate; border-spacing: 0; color: #333; }
.c-day { width: 116px; }
.c-date { width: 231px; }
.c-time { width: 135px; }
.c-temp { width: 287px; }
.c-desc { width: 390px; }
.c-dir { width: 256px; }
.c-speed { width: 275px; }
.c-fly { width: 818px; }
.forecast th { padding: 20px 0; background: #f1f1f1; border-bottom: 4px solid #212529; color: #999; font-size: 24px; line-height: 28px; }
.forecast th:first-child { border-top-left-radius: 14px; }
.forecast th:last-child { border-top-right-radius: 14px; }
.forecast td { height: 88px; padding: 16px 0; border-bottom: 2px solid #dee2e6; font-size: 36px; line-height: 54px; text-align: center; white-space: nowrap; }
.forecast .desc { padding-left: 16px; text-align: left; }
.forecast .fly { padding: 0 2px 0 0; border-bottom-color: #fff; vertical-align: top; }
.alert { height: 86px; padding: 17px 0 0 32px; border-radius: 4px; background: #ea3323; color: #fff; font-size: 28px; line-height: 42px; font-weight: 700; }
.i-rain, .i-cloud { height: 44.800px; vertical-align: -8.500px; fill: #333; }
.i-rain { width: 44.800px; }
.i-cloud { width: 56px; }
```
